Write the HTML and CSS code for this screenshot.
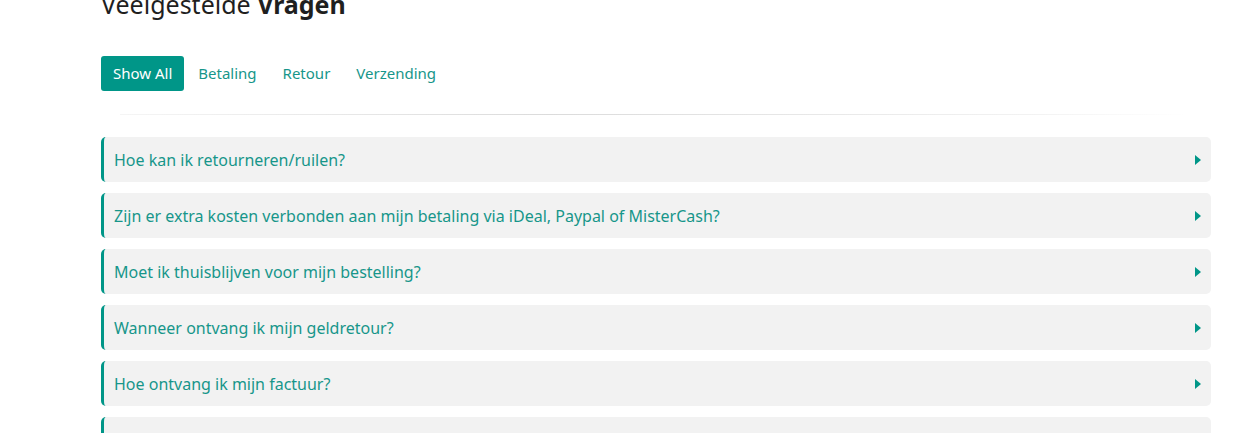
FILE: index.html
```html
<!doctype html>
<html>
<head>
  <meta charset="UTF-8">
  <title>Veelgestelde Vragen</title>
  <link rel="stylesheet" href="styles.css">
</head>
<body>
  <div class="faq">
    <h2 class="faq-title">Veelgestelde <b>Vragen</b></h2>

    <div class="tabs">
      <a href="javascript:;" class="tab active">Show All</a>
      <a href="javascript:;" class="tab">Betaling</a>
      <a href="javascript:;" class="tab">Retour</a>
      <a href="javascript:;" class="tab">Verzending</a>
    </div>

    <div class="divider"></div>

    <ul class="questions">
      <li class="question"><span>Hoe kan ik retourneren/ruilen?</span><i class="caret"></i></li>
      <li class="question"><span>Zijn er extra kosten verbonden aan mijn betaling via iDeal, Paypal of MisterCash?</span><i class="caret"></i></li>
      <li class="question"><span>Moet ik thuisblijven voor mijn bestelling?</span><i class="caret"></i></li>
      <li class="question"><span>Wanneer ontvang ik mijn geldretour?</span><i class="caret"></i></li>
      <li class="question"><span>Hoe ontvang ik mijn factuur?</span><i class="caret"></i></li>
      <li class="question"><span>Hoe lang duurt de levering?</span><i class="caret"></i></li>
    </ul>
  </div>
</body>
</html>
```

FILE: styles.css
```css
*{
  margin:0;
  padding:0;
  box-sizing:border-box;
}
body{
  font-family:"Noto Sans","Open Sans",sans-serif;
  background:#fff;
  overflow:hidden;
}
.faq{
  width:1110px;
  margin-left:101px;
}
.faq-title{
  font-size:25px;
  line-height:36px;
  font-weight:400;
  color:#1f1f1f;
  margin-top:-14px;
}
.faq-title b{
  font-weight:700;
}

.tabs{
  display:flex;
  align-items:center;
  margin-top:34px;
}
.tab{
  display:block;
  height:35px;
  line-height:35px;
  padding:0 12px;
  margin-right:2px;
  font-size:15px;
  color:#17968a;
  text-decoration:none;
  border-radius:3px;
}
.tab.active{
  background:#009688;
  color:#fff;
}

.divider{
  height:1px;
  margin:23px 0 22px 19px;
  width:1070px;
  background:linear-gradient(to right, rgba(0,0,0,0.04), rgba(0,0,0,0.14) 40%, rgba(0,0,0,0.05) 85%, rgba(0,0,0,0));
}

.questions{
  list-style:none;
}
.question{
  display:flex;
  align-items:center;
  justify-content:space-between;
  height:45px;
  margin-bottom:11px;
  padding:0 10px;
  background:#f2f2f2;
  border-left:3px solid #009688;
  border-radius:5px;
  font-size:16px;
  color:#17968a;
}
.caret{
  display:block;
  width:0;
  height:0;
  border-left:6px solid #009688;
  border-top:5px solid transparent;
  border-bottom:5px solid transparent;
}
```
